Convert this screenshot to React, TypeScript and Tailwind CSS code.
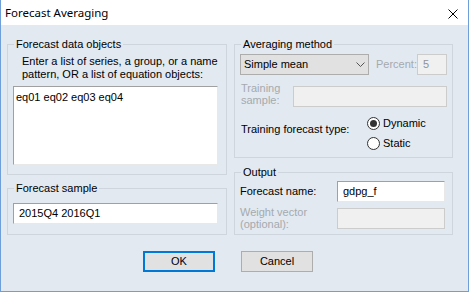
import React from "react";

const font = { fontFamily: '"Liberation Sans", Arial, sans-serif' };

function Radio({ checked, label }: { checked: boolean; label: string }) {
  return (
    <div className="flex h-[20px] items-center">
      <div className="flex h-[13px] w-[13px] items-center justify-center rounded-full border border-[#333333] bg-white">
        {checked && <div className="h-[7px] w-[7px] rounded-full bg-[#333333]" />}
      </div>
      <span className="ml-[3px] text-[11px] leading-[13px] text-black">{label}</span>
    </div>
  );
}

export default function App() {
  return (
    <div
      className="flex h-[292px] w-[469px] flex-col border-x border-b border-[#6f9fd8] bg-[#e2e9f1] text-[11px] text-black"
      style={font}
    >
      {/* Title bar */}
      <div className="flex h-[25px] shrink-0 items-center justify-between bg-white pl-[4px] pr-[10px]">
        <span
          className="text-[11.5px] leading-[16px] text-black"
          style={{ fontFamily: '"Noto Sans", "Liberation Sans", sans-serif' }}
        >
          Forecast Averaging
        </span>
        <svg width="10" height="10" viewBox="0 0 10 10" className="mt-[3px]">
          <path d="M0.5 0.5 L9.5 9.5 M9.5 0.5 L0.5 9.5" stroke="#000" strokeWidth="1" />
        </svg>
      </div>

      {/* Body */}
      <div className="flex flex-col px-[6px]">
        <div className="flex gap-[7px]">
          {/* Left column */}
          <div className="flex w-[220px] flex-col">
            <fieldset className="mt-[11px] border border-[#cfd5dc] px-0 pb-[9px]">
              <legend className="ml-[6px] px-[2px] leading-[16px]">Forecast data objects</legend>
              <div className="ml-[14px] mt-[3px] leading-[13px]">
                Enter a list of series, a group, or a name
                <br />
                pattern, OR a list of equation objects:
              </div>
              <div className="ml-[5px] mt-[5px] h-[79px] w-[205px] border border-[#a0a0a0] border-b-[#e8e8e8] border-r-[#e8e8e8] bg-white pl-[2px] pt-[4px] leading-[13px]">
                eq01 eq02 eq03 eq04
              </div>
            </fieldset>

            <fieldset className="mt-[5px] border border-[#cfd5dc] pb-[10px]">
              <legend className="ml-[6px] px-[2px] leading-[16px]">Forecast sample</legend>
              <div className="ml-[5px] mt-[7px] flex h-[21px] w-[205px] items-center border border-[#a0a0a0] border-b-[#e8e8e8] border-r-[#e8e8e8] bg-white pl-[5px]">
                2015Q4 2016Q1
              </div>
            </fieldset>
          </div>

          {/* Right column */}
          <div className="flex w-[219px] flex-col">
            <fieldset className="mt-[11px] border border-[#cfd5dc] px-[5px] pb-[4px]">
              <legend className="ml-[1px] px-[2px] leading-[16px]">Averaging method</legend>
              <div className="mt-[2px] flex items-center">
                <div className="flex h-[21px] w-[129px] items-center justify-between border border-[#adadad] bg-[#e1e1e1] pl-[3px] pr-[3px]">
                  <span>Simple mean</span>
                  <svg width="9" height="5" viewBox="0 0 9 5">
                    <path d="M0.5 0.5 L4.5 4.5 L8.5 0.5" stroke="#555" strokeWidth="1" fill="none" />
                  </svg>
                </div>
                <span className="ml-[7px] text-[#a5a9ae]">Percent:</span>
                <div className="ml-auto flex h-[21px] w-[30px] items-center border border-[#cccccc] bg-[#f0f0f0] pl-[5px] text-[#8f9399]">
                  5
                </div>
              </div>
              <div className="mt-[7px] flex items-start">
                <div className="ml-[1px] w-[52px] leading-[12px] text-[#a5a9ae]">
                  Training
                  <br />
                  sample:
                </div>
                <div className="ml-auto mt-[4px] h-[21px] w-[154px] border border-[#cccccc] bg-[#f0f0f0]" />
              </div>
              <div className="mt-[6px] flex items-start">
                <div className="ml-[1px] mt-[10px] w-[126px] leading-[13px]">Training forecast type:</div>
                <div className="flex flex-col">
                  <Radio checked label="Dynamic" />
                  <Radio checked={false} label="Static" />
                </div>
              </div>
            </fieldset>

            <fieldset className="mt-[6px] border border-[#cfd5dc] pb-[4px] pl-[5px] pr-[7px]">
              <legend className="ml-[1px] px-[2px] leading-[16px]">Output</legend>
              <div className="mt-[1px] flex items-center">
                <span>Forecast name:</span>
                <div className="ml-auto flex h-[21px] w-[108px] items-center border border-[#a0a0a0] border-b-[#e8e8e8] border-r-[#e8e8e8] bg-white pl-[5px]">
                  gdpg_f
                </div>
              </div>
              <div className="mt-[4px] flex items-start">
                <div className="leading-[12px] text-[#a5a9ae]">
                  Weight vector
                  <br />
                  (optional):
                </div>
                <div className="ml-auto mt-[2px] h-[21px] w-[108px] border border-[#cccccc] bg-[#f0f0f0]" />
              </div>
            </fieldset>
          </div>
        </div>

        {/* Buttons */}
        <div className="mt-[16px] flex gap-[26px] pl-[136px]">
          <div className="flex h-[21px] w-[72px] items-center justify-center border-2 border-[#0078d7] bg-[#e1e1e1]">
            OK
          </div>
          <div className="flex h-[21px] w-[72px] items-center justify-center border border-[#adadad] bg-[#e1e1e1]">
            Cancel
          </div>
        </div>
      </div>
    </div>
  );
}
